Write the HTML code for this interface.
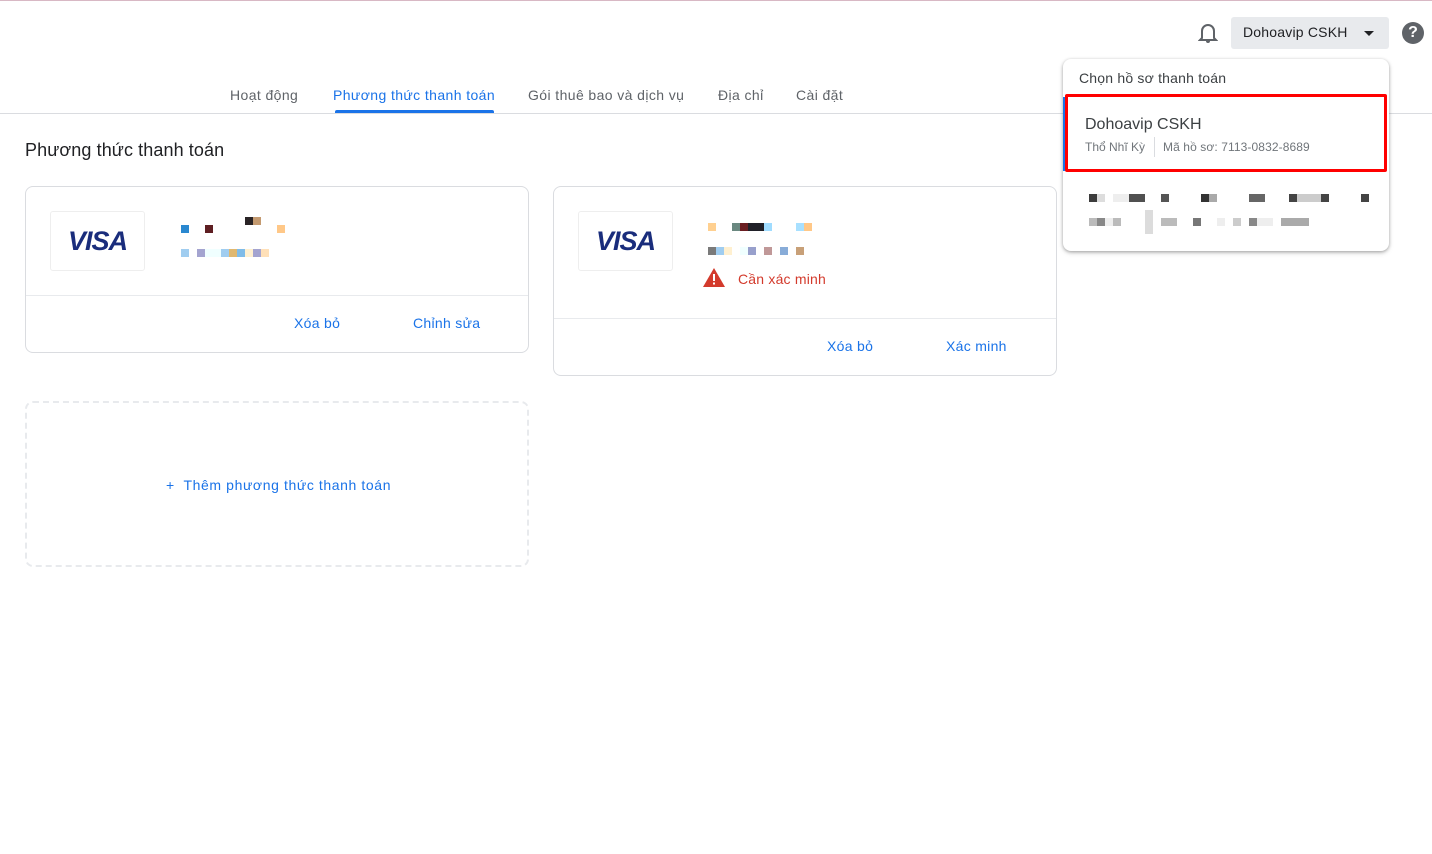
<!DOCTYPE html><html><head><meta charset="utf-8"><style>
*{box-sizing:border-box}body{margin:0;width:1432px;height:854px;background:#fff;font-family:"Liberation Sans",sans-serif;position:relative;overflow:hidden;color:#3c4043}
.a{position:absolute}
.tab{position:absolute;top:87px;font-size:14px;color:#5f6368;letter-spacing:0.4px}
.card{position:absolute;border:1px solid #dadce0;border-radius:8px}
.visa{position:absolute;width:95px;height:60px;border:1px solid #eee;border-radius:3px;font:italic bold 27px "Liberation Sans",sans-serif;color:#1a2d7c;text-align:center;line-height:58px;letter-spacing:-1px}
.lnk{position:absolute;color:#1a73e8;font-size:14px;letter-spacing:0.3px}
.px{position:absolute;width:8px;height:8px}
</style></head><body>
<div class="a" style="left:0;top:0;width:1432px;height:1px;background:#d8b8c4"></div>
<svg class="a" style="left:1198px;top:22px" width="20" height="22" viewBox="0 0 20 22"><path d="M4 16V9a6 6 0 0 1 12 0v7l2 2H2z" fill="none" stroke="#5f6368" stroke-width="2"/><path d="M8 19a2 2 0 0 0 4 0" fill="#5f6368"/></svg>
<div class="a" style="left:1231px;top:17px;width:158px;height:32px;background:#e8eaed;border-radius:3px;font-size:14px;line-height:31px;padding-left:12px;color:#202124;letter-spacing:0.2px">Dohoavip CSKH</div>
<div class="a" style="left:1364px;top:31px;border:5px solid transparent;border-top:5px solid #202124"></div>
<div class="a" style="left:1402px;top:22px;width:22px;height:22px;border-radius:50%;background:#5f6368;color:#fff;font:bold 16px/22px 'Liberation Sans';text-align:center">?</div>
<div class="tab" style="left:230px">Hoạt động</div>
<div class="tab" style="left:333px;color:#1a73e8">Phương thức thanh toán</div>
<div class="a" style="left:335px;top:110px;width:159px;height:3px;background:#1a73e8;border-radius:2px 2px 0 0"></div>
<div class="tab" style="left:528px">Gói thuê bao và dịch vụ</div>
<div class="tab" style="left:718px">Địa chỉ</div>
<div class="tab" style="left:796px">Cài đặt</div>
<div class="a" style="left:0;top:113px;width:1432px;height:1px;background:#dadce0"></div>
<div class="a" style="left:25px;top:140px;font-size:18px;color:#202124;letter-spacing:0.1px">Phương thức thanh toán</div>
<div class="card" style="left:25px;top:186px;width:504px;height:167px"></div>
<div class="visa" style="left:50px;top:211px">VISA</div>
<div class="a" style="left:26px;top:295px;width:502px;height:1px;background:#e8eaed"></div>
<div class="px" style="left:181px;top:225px;background:#2a88d0"></div><div class="px" style="left:205px;top:225px;background:#5e1e22"></div><div class="px" style="left:245px;top:217px;background:#2a2426"></div><div class="px" style="left:253px;top:217px;background:#c49a70"></div><div class="px" style="left:277px;top:225px;background:#ffc888"></div>
<div class="a" style="left:181px;top:249px;width:88px;height:8px;background:linear-gradient(90deg,#a0cdf0 0 8px,#fff 8px 16px,#a4a4d0 16px 24px,#f0ffff 24px 40px,#a0cdf0 40px 48px,#e0b870 48px 56px,#80bce8 56px 64px,#fff0d0 64px 72px,#a4a4d0 72px 80px,#ffe0b8 80px)"></div>
<div class="lnk" style="left:294px;top:315px">Xóa bỏ</div><div class="lnk" style="left:413px;top:315px">Chỉnh sửa</div>
<div class="card" style="left:553px;top:186px;width:504px;height:190px"></div>
<div class="visa" style="left:578px;top:211px">VISA</div>
<div class="a" style="left:554px;top:318px;width:502px;height:1px;background:#e8eaed"></div>
<div class="px" style="left:708px;top:223px;background:#ffd090"></div><div class="a" style="left:732px;top:223px;width:40px;height:8px;background:linear-gradient(90deg,#6a8880 0 8px,#6a1e22 8px 16px,#202028 16px 32px,#a0dcff 32px)"></div><div class="a" style="left:796px;top:223px;width:16px;height:8px;background:linear-gradient(90deg,#a8e0ff 50%,#ffc888 50%)"></div>
<div class="a" style="left:708px;top:247px;width:96px;height:8px;background:linear-gradient(90deg,#7a7a7a 0 8px,#a0cdf0 8px 16px,#fff0d0 16px 24px,#fff 24px 32px,#f0ffff 32px 40px,#98a0cc 40px 48px,#fff 48px 56px,#c09898 56px 64px,#fff 64px 72px,#88acd8 72px 80px,#fff 80px 88px,#c8a078 88px)"></div>
<svg class="a" style="left:703px;top:268px" width="22" height="19" viewBox="0 0 22 19"><path d="M11 0L22 19H0z" fill="#d33a2c"/><rect x="10" y="6" width="2" height="7" fill="#fff"/><rect x="10" y="14.5" width="2" height="2" fill="#fff"/></svg>
<div class="a" style="left:738px;top:271px;font-size:14px;color:#d33a2c;letter-spacing:0.2px">Cần xác minh</div>
<div class="lnk" style="left:827px;top:338px">Xóa bỏ</div><div class="lnk" style="left:946px;top:338px">Xác minh</div>
<div class="a" style="left:25px;top:401px;width:504px;height:166px;border:2px dashed #e8eaed;border-radius:8px"></div>
<div class="lnk" style="left:166px;top:477px;letter-spacing:0.6px">+&nbsp; Thêm phương thức thanh toán</div>
<div class="a" style="left:1063px;top:59px;width:326px;height:192px;background:#fff;border-radius:8px;box-shadow:0 1px 3px rgba(0,0,0,.3),0 2px 6px rgba(0,0,0,.12)"></div>
<div class="a" style="left:1079px;top:70px;font-size:14px;color:#3c4043;letter-spacing:0.2px">Chọn hồ sơ thanh toán</div>
<div class="a" style="left:1063px;top:97px;width:3px;height:74px;background:#1a73e8"></div>
<div class="a" style="left:1065px;top:94px;width:322px;height:78px;border:3px solid #f00;border-radius:2px"></div>
<div class="a" style="left:1085px;top:116px;font-size:16px;color:#3c4043">Dohoavip CSKH</div>
<div class="a" style="left:1085px;top:140px;font-size:12px;color:#70757a">Thổ Nhĩ Kỳ</div>
<div class="a" style="left:1154px;top:137px;width:1px;height:20px;background:#dadce0"></div>
<div class="a" style="left:1163px;top:140px;font-size:12px;color:#70757a;letter-spacing:0.1px">Mã hồ sơ: 7113-0832-8689</div>
<div class="a" style="left:1089px;top:194px;width:280px;height:8px;background:linear-gradient(90deg,#3c3c3c 0 8px,#ddd 8px 16px,#fff 16px 24px,#eee 24px 40px,#505050 40px 56px,#fff 56px 72px,#555 72px 80px,#fff 80px 112px,#333 112px 120px,#aaa 120px 128px,#fff 128px 160px,#666 160px 176px,#fff 176px 200px,#444 200px 208px,#ccc 208px 232px,#444 232px 240px,#fff 240px 272px,#444 272px)"></div>
<div class="a" style="left:1089px;top:218px;width:220px;height:8px;background:linear-gradient(90deg,#bbb 0 8px,#888 8px 16px,#eee 16px 24px,#bbb 24px 32px,#fff 32px 72px,#bbb 72px 88px,#fff 88px 104px,#777 104px 112px,#fff 112px 128px,#eee 128px 136px,#fff 136px 144px,#ccc 144px 152px,#fff 152px 160px,#888 160px 168px,#eee 168px 184px,#fff 184px 192px,#aaa 192px 216px)"></div>
<div class="a" style="left:1145px;top:210px;width:8px;height:24px;background:#dcdcdc"></div>
</body></html>
